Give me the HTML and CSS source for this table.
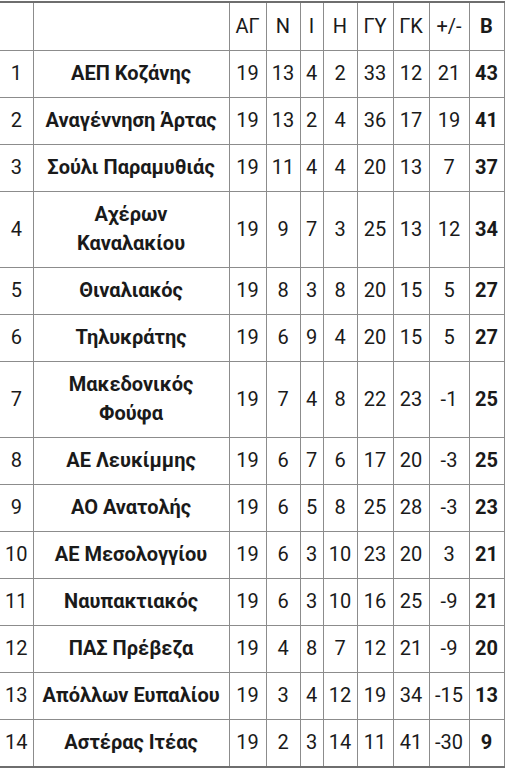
FILE: index.html
```html
<!DOCTYPE html>
<html lang="el">
<head>
<meta charset="utf-8">
<title>Βαθμολογία</title>
<link rel="stylesheet" href="styles.css">
</head>
<body>
<div class="page">
<table class="standings">
  <colgroup>
    <col class="c-pos"><col class="c-team"><col class="c-ag"><col class="c-n"><col class="c-i"><col class="c-h"><col class="c-gy"><col class="c-gk"><col class="c-diff"><col class="c-b">
  </colgroup>
  <thead>
    <tr><th></th><th></th><th>ΑΓ</th><th>Ν</th><th>Ι</th><th>Η</th><th>ΓΥ</th><th>ΓΚ</th><th>+/-</th><th class="pts">Β</th></tr>
  </thead>
  <tbody>
    <tr><td>1</td><td class="team">ΑΕΠ Κοζάνης</td><td>19</td><td>13</td><td>4</td><td>2</td><td>33</td><td>12</td><td>21</td><td class="pts">43</td></tr>
    <tr><td>2</td><td class="team">Αναγέννηση Άρτας</td><td>19</td><td>13</td><td>2</td><td>4</td><td>36</td><td>17</td><td>19</td><td class="pts">41</td></tr>
    <tr><td>3</td><td class="team">Σούλι Παραμυθιάς</td><td>19</td><td>11</td><td>4</td><td>4</td><td>20</td><td>13</td><td>7</td><td class="pts">37</td></tr>
    <tr><td>4</td><td class="team">Αχέρων<br>Καναλακίου</td><td>19</td><td>9</td><td>7</td><td>3</td><td>25</td><td>13</td><td>12</td><td class="pts">34</td></tr>
    <tr><td>5</td><td class="team">Θιναλιακός</td><td>19</td><td>8</td><td>3</td><td>8</td><td>20</td><td>15</td><td>5</td><td class="pts">27</td></tr>
    <tr><td>6</td><td class="team">Τηλυκράτης</td><td>19</td><td>6</td><td>9</td><td>4</td><td>20</td><td>15</td><td>5</td><td class="pts">27</td></tr>
    <tr><td>7</td><td class="team">Μακεδονικός<br>Φούφα</td><td>19</td><td>7</td><td>4</td><td>8</td><td>22</td><td>23</td><td>-1</td><td class="pts">25</td></tr>
    <tr><td>8</td><td class="team">ΑΕ Λευκίμμης</td><td>19</td><td>6</td><td>7</td><td>6</td><td>17</td><td>20</td><td>-3</td><td class="pts">25</td></tr>
    <tr><td>9</td><td class="team">ΑΟ Ανατολής</td><td>19</td><td>6</td><td>5</td><td>8</td><td>25</td><td>28</td><td>-3</td><td class="pts">23</td></tr>
    <tr><td>10</td><td class="team">ΑΕ Μεσολογγίου</td><td>19</td><td>6</td><td>3</td><td>10</td><td>23</td><td>20</td><td>3</td><td class="pts">21</td></tr>
    <tr><td>11</td><td class="team">Ναυπακτιακός</td><td>19</td><td>6</td><td>3</td><td>10</td><td>16</td><td>25</td><td>-9</td><td class="pts">21</td></tr>
    <tr><td>12</td><td class="team">ΠΑΣ Πρέβεζα</td><td>19</td><td>4</td><td>8</td><td>7</td><td>12</td><td>21</td><td>-9</td><td class="pts">20</td></tr>
    <tr><td>13</td><td class="team">Απόλλων Ευπαλίου</td><td>19</td><td>3</td><td>4</td><td>12</td><td>19</td><td>34</td><td>-15</td><td class="pts">13</td></tr>
    <tr><td>14</td><td class="team">Αστέρας Ιτέας</td><td>19</td><td>2</td><td>3</td><td>14</td><td>11</td><td>41</td><td>-30</td><td class="pts">9</td></tr>
  </tbody>
</table>
</div>
</body>
</html>
```

FILE: styles.css
```css
html, body {
  margin: 0;
  padding: 0;
  background: #ffffff;
}

.page {
  padding-top: 1px;
}

.standings {
  border-collapse: collapse;
  table-layout: fixed;
  width: 504px;
  font-family: Roboto, "Noto Sans", sans-serif;
  font-size: 20px;
  color: #1a1a1a;
  border-top: 2px solid #6e6e6e;
  border-bottom: 2px solid #6e6e6e;
}

.c-pos { width: 33px; }
.c-team { width: 196px; }
.c-ag { width: 37px; }
.c-n { width: 34px; }
.c-i { width: 23px; }
.c-h { width: 34px; }
.c-gy { width: 36px; }
.c-gk { width: 36px; }
.c-diff { width: 40px; }
.c-b { width: 35px; }

.standings th,
.standings td {
  border: 1px solid #8c8c8c;
  padding: 8px 0 9px;
  line-height: 29px;
  text-align: center;
  font-weight: 400;
  white-space: nowrap;
}

.standings th:first-child,
.standings td:first-child {
  border-left: none;
}

.standings thead th {
  padding-top: 9px;
}

.standings .team,
.standings .pts {
  font-weight: 700;
}
```
